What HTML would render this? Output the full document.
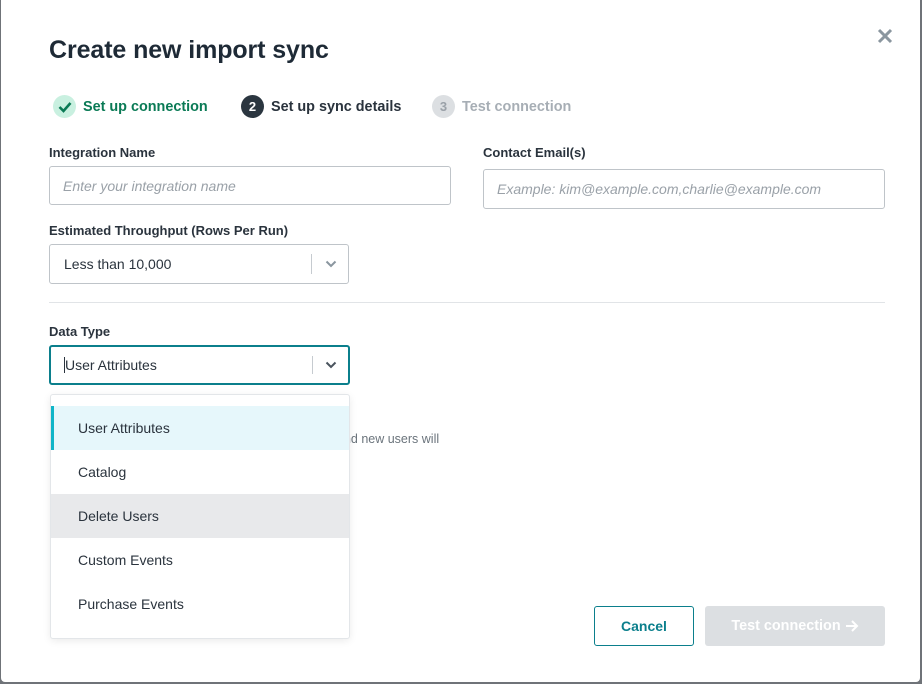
<!DOCTYPE html>
<html><head><meta charset="utf-8"><style>
*{box-sizing:border-box;margin:0;padding:0}
body{width:922px;height:684px;background:#6f7378;font-family:"Liberation Sans",sans-serif;position:relative;overflow:hidden}
.modal{position:absolute;left:1px;top:0;width:919px;height:682px;background:#fff;border-radius:0 0 4px 4px}
.a{position:absolute}
h1{position:absolute;left:49px;top:36px;font-size:25px;font-weight:bold;color:#1e2a36;letter-spacing:-0.1px}
.lbl{position:absolute;font-size:13px;font-weight:bold;color:#2a333d}
.inp{position:absolute;border:1px solid #bfc4c9;border-radius:3px;background:#fff;font-size:14px;color:#9aa1a8;font-style:italic;padding-left:13px;display:flex;align-items:center}
.sel{position:absolute;border:1px solid #bfc4c9;border-radius:3px;font-size:14px;color:#2a333d;padding-left:14px;display:flex;align-items:center}
.sep{position:absolute;right:36px;top:9px;bottom:9px;width:1px;background:#c6cbd0}
.chev{position:absolute;right:11px;top:50%;margin-top:-4px}
.step{position:absolute;top:95px;display:flex;align-items:center;font-size:14.4px;font-weight:bold}
.circ{width:23px;height:23px;border-radius:50%;display:flex;align-items:center;justify-content:center;font-size:13px;font-weight:bold;margin-right:7px}
.dd{position:absolute;left:49px;top:394px;width:300px;height:245px;background:#fff;border:1px solid #e3e6e9;border-radius:3px;box-shadow:0 2px 8px rgba(0,0,0,.08)}
.it{position:absolute;left:0;width:298px;height:44px;font-size:14px;color:#2a333d;padding-left:27px;display:flex;align-items:center}
</style></head><body>
<div class="modal">
<h1 style="left:48px">Create new import sync</h1>
<svg class="a" style="left:876px;top:28px" width="16" height="16" viewBox="0 0 16 16"><path d="M2 2L14 14M14 2L2 14" stroke="#8a969f" stroke-width="3"/></svg>

<div class="step" style="left:52px;color:#0a7a55"><div class="circ" style="background:#c9f0e0"><svg width="14" height="12" viewBox="0 0 14 12"><path d="M1.5 6L5.5 10L12.5 2" fill="none" stroke="#0a7a55" stroke-width="2.6"/></svg></div>Set up connection</div>
<div class="step" style="left:240px;color:#2a333d"><div class="circ" style="background:#2b3640;color:#fff">2</div>Set up sync details</div>
<div class="step" style="left:431px;color:#a7aeb5"><div class="circ" style="background:#dcdfe2;color:#9aa1a8">3</div>Test connection</div>

<div class="lbl" style="left:48px;top:145px">Integration Name</div>
<div class="inp" style="left:48px;top:166px;width:402px;height:39px">Enter your integration name</div>
<div class="lbl" style="left:482px;top:145px">Contact Email(s)</div>
<div class="inp" style="left:482px;top:169px;width:402px;height:40px">Example: kim@example.com,charlie@example.com</div>

<div class="lbl" style="left:48px;top:223px">Estimated Throughput (Rows Per Run)</div>
<div class="sel" style="left:48px;top:244px;width:300px;height:40px">Less than 10,000<div class="sep"></div><svg class="chev" width="12" height="8" viewBox="0 0 12 8"><path d="M1.5 1.5L6 6L10.5 1.5" fill="none" stroke="#8a969f" stroke-width="2"/></svg></div>

<div class="a" style="left:48px;top:302px;width:836px;height:1px;background:#e1e4e7"></div>

<div class="lbl" style="left:48px;top:324px">Data Type</div>
<div class="sel" style="left:48px;top:345px;width:301px;height:40px;border:2px solid #0b7f8c;padding-left:13px"><span style="border-left:1px solid #2a333d;height:16px;margin-right:0"></span>User Attributes<div class="sep" style="right:35px"></div><svg class="chev" width="12" height="8" viewBox="0 0 12 8"><path d="M1.5 1.5L6 6L10.5 1.5" fill="none" stroke="#4a545e" stroke-width="2"/></svg></div>

<div class="a" style="left:336px;top:432px;font-size:12.5px;color:#6b747c">and new users will</div>

<div class="dd">
<div class="it" style="top:11px;background:#e6f7fb;border-left:3px solid #0fb5c8;padding-left:24px">User Attributes</div>
<div class="it" style="top:55px">Catalog</div>
<div class="it" style="top:99px;background:#e8e9eb">Delete Users</div>
<div class="it" style="top:143px">Custom Events</div>
<div class="it" style="top:187px">Purchase Events</div>
</div>

<div class="a" style="left:593px;top:606px;width:100px;height:40px;border:1px solid #0b7f8c;border-radius:3px;display:flex;align-items:center;justify-content:center;font-size:14px;font-weight:bold;color:#0b7f8c">Cancel</div>
<div class="a" style="left:704px;top:606px;width:180px;height:40px;background:#dcdfe2;border-radius:3px;display:flex;align-items:center;justify-content:center;font-size:14.4px;font-weight:bold;color:#fff">Test connection <svg style="margin-left:4px" width="14" height="12" viewBox="0 0 14 12"><path d="M1 6H12M7 1L12 6L7 11" fill="none" stroke="#fff" stroke-width="2"/></svg></div>
</div>
</body></html>
